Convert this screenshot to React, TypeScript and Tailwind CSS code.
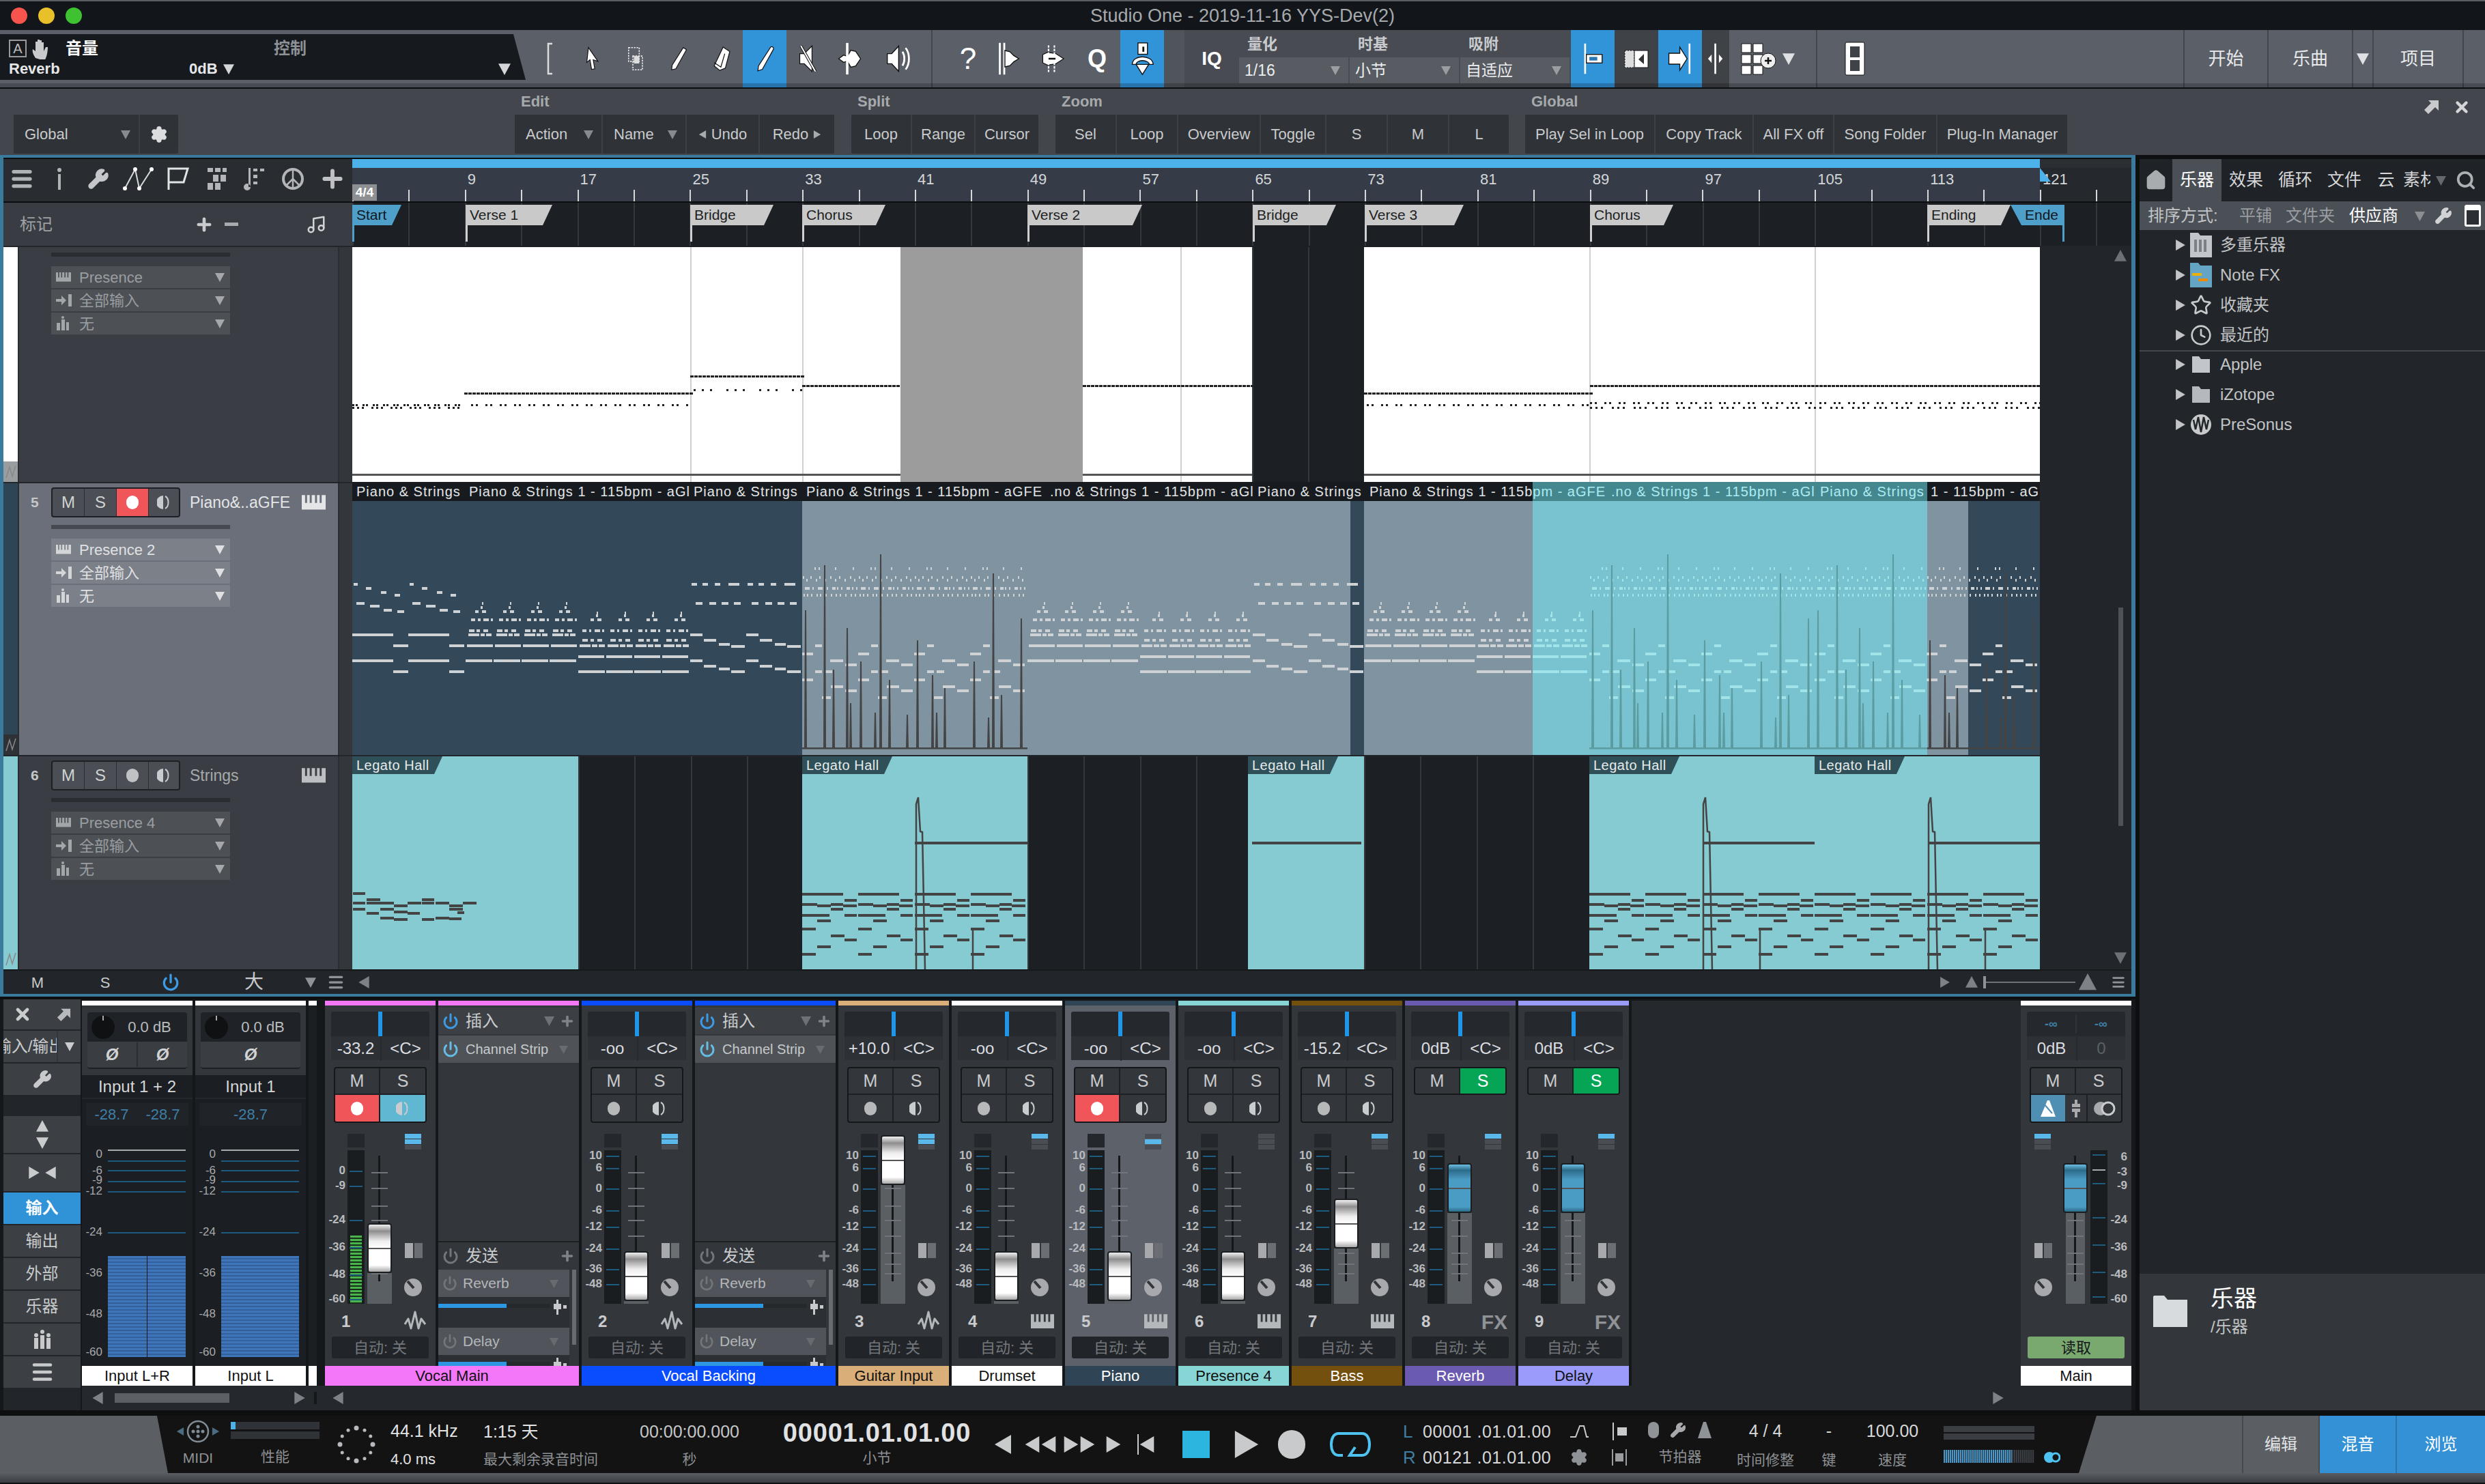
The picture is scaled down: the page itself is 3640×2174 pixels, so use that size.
import { Fragment, type ReactNode } from "react";
import { Power, Plus, Search, Star, Clock, Wrench, Settings, X, Music, Home, Menu } from "lucide-react";

type Note = [number, number, number];

function Tri({ dir = "down", s = 14, c = "#a8abae" }: { dir?: "down" | "up" | "left" | "right"; s?: number; c?: string }) {
  const pts = { down: "0,1 14,1 7,14", up: "7,0 14,13 0,13", left: "13,0 13,14 1,7", right: "1,0 1,14 13,7" }[dir];
  return (
    <svg width={s} height={s} viewBox="0 0 14 14" className="shrink-0">
      <polygon points={pts} fill={c} />
    </svg>
  );
}

function PianoIcon({ w = 36, c = "#b5b8bb" }: { w?: number; c?: string }) {
  return (
    <svg width={w} height={w * 0.62} viewBox="0 0 36 22" className="shrink-0">
      <path d="M0 0h5v12h3V0h4v12h3V0h5v12h3V0h4v12h3V0h6v22H0z" fill={c} />
    </svg>
  );
}

function WaveIcon() {
  return (
    <svg width="34" height="32" viewBox="0 0 34 32" className="shrink-0">
      <path d="M1 20l5-8 4 14 6-24 5 24 4-14 6 8" fill="none" stroke="#b5b8bb" strokeWidth="3" strokeLinejoin="round" />
    </svg>
  );
}

function MonitorIcon({ c = "#c9cccf" }: { c?: string }) {
  return (
    <svg width="20" height="22" viewBox="0 0 20 22">
      <path d="M9 1a10 10 0 0 0 0 20z" fill={c} />
      <path d="M12 2c6 3 6 15 0 18" fill="none" stroke={c} strokeWidth="2" />
    </svg>
  );
}

const ICON_H: Record<string, number> = { arrow: 42, range: 42, pencil: 42, eraser: 44, pen: 44, mute: 44, split: 48, speaker: 50, bend: 50, slice: 46, follow: 50, snapA: 48, snapC: 48, snapD: 48 };

function ToolIcon({ name }: { name: string }) {
  const sw = { fill: "#fff", stroke: "#111", strokeWidth: 1.5 };
  const h = ICON_H[name] ?? 54;
  const box = (children: ReactNode) => (
    <svg width={(h * 44) / 54} height={h} viewBox="0 0 44 54">
      {children}
    </svg>
  );
  if (name === "bracket") return box(<path d="M27 5h-6v44h6" fill="none" stroke="#ddd" strokeWidth="2.5" />);
  if (name === "arrow") return box(<path d="M14 6l18 26-9-3 3 17-6 1-3-18-6 5z" {...sw} />);
  if (name === "range")
    return box(
      <g fill="none" stroke="#eee" strokeWidth="2" strokeDasharray="3 2">
        <rect x="10" y="6" width="20" height="26" />
        <rect x="18" y="22" width="18" height="26" />
        <path d="M20 22h10v14H20z" fill="#ddd" stroke="none" />
      </g>
    );
  if (name === "pencil") return box(<path d="M32 6l6 4-20 36-8 2 1-9z" {...sw} />);
  if (name === "eraser")
    return box(
      <g {...sw}>
        <path d="M26 6l12 8-8 30-10 4-10-8z" />
        <path d="M10 34l12 8 7-24" fill="none" />
      </g>
    );
  if (name === "pen") return box(<path d="M33 6c3-2 6 1 5 4L18 46l-8 3 1-9z" {...sw} />);
  if (name === "mute")
    return box(
      <g>
        <path d="M8 18h8l14-14v46L16 36H8z" {...sw} />
        <path d="M10 4l26 46" stroke="#111" strokeWidth="5" />
        <path d="M10 4l26 46" stroke="#fff" strokeWidth="2.5" />
      </g>
    );
  if (name === "split")
    return box(
      <g>
        <path d="M4 27l8-6 6 2 6-10 8 2 8 12-8 12-8 2-6-10-6 2z" {...sw} />
        <path d="M18 1v52" stroke="#fff" strokeWidth="4" />
      </g>
    );
  if (name === "speaker")
    return box(
      <g>
        <path d="M4 19h7L22 7v40L11 35H4z" {...sw} />
        <path d="M28 16c4 6 4 16 0 22M33 10c7 9 7 25 0 34" fill="none" stroke="#fff" strokeWidth="3" />
      </g>
    );
  if (name === "bend")
    return box(
      <g>
        <path d="M6 2v50M13 2v50" stroke="#fff" strokeWidth="3" />
        <path d="M14 14l8 2 6 6 8 5-8 5-6 6-8 2z" {...sw} />
      </g>
    );
  if (name === "slice")
    return box(
      <g>
        <path d="M4 20l8-4 14 2 14 9-14 9-14 2-8-4z" {...sw} />
        <path d="M14 4v46M24 4v46" stroke="#fff" strokeWidth="2.5" strokeDasharray="4 2" />
        <path d="M14 27h12" stroke="#111" strokeWidth="3" />
      </g>
    );
  if (name === "follow")
    return box(
      <g>
        <rect x="15" y="2" width="15" height="18" {...sw} />
        <path d="M22 8h3v8h-3z" fill="#111" />
        <path d="M6 36c0-8 8-12 16-12s17 4 17 12h-6c0-3-5-6-11-6s-10 3-10 6z" {...sw} />
        <path d="M12 36h20l-10 16z" {...sw} />
      </g>
    );
  if (name === "snapA")
    return box(
      <g>
        <path d="M10 2v50" stroke="#fff" strokeWidth="3" />
        <rect x="12" y="20" width="26" height="14" {...sw} />
        <rect x="17" y="24" width="13" height="6" fill="#2d78b0" />
      </g>
    );
  if (name === "snapB")
    return box(
      <g>
        <rect x="5" y="15" width="14" height="25" fill="#ddd" stroke="#111" strokeDasharray="2 2" />
        <rect x="19" y="15" width="20" height="25" fill="#fff" stroke="#111" />
        <path d="M33 20v15l-8-7z" fill="#333" />
      </g>
    );
  if (name === "snapC")
    return box(
      <g>
        <path d="M4 18h18V8l12 19-12 19V36H4z" {...sw} />
        <path d="M38 2v50" stroke="#fff" strokeWidth="3" />
      </g>
    );
  if (name === "snapD")
    return box(
      <g>
        <path d="M22 2v50" stroke="#fff" strokeWidth="3" />
        <path d="M16 20l-6 7 6 7zM28 20l6 7-6 7z" fill="#fff" />
      </g>
    );
  if (name === "grid")
    return (
      <svg width="60" height="54" viewBox="0 0 60 54">
        <path d="M4 5h14v13H4zM21 5h14v13H21zM4 21h14v13H4zM21 21h14v13H21zM4 37h14v13H4zM21 37h14v13H21z" fill="#fff" stroke="#111" />
        <circle cx="43" cy="30" r="11" fill="#eee" stroke="#111" />
        <path d="M38 30h10M43 25v10" stroke="#111" strokeWidth="2.5" />
      </svg>
    );
  if (name === "film")
    return box(
      <g>
        <rect x="8" y="3" width="28" height="48" rx="2" fill="#fff" stroke="#111" />
        <rect x="15" y="9" width="14" height="16" fill="#3f4247" />
        <rect x="15" y="29" width="14" height="16" fill="#3f4247" />
      </g>
    );
  return null;
}

function Cell({ w, blue, dark, border, children }: { w: number; blue?: boolean; dark?: boolean; border?: boolean; children?: ReactNode }) {
  return (
    <div
      className={`flex h-full shrink-0 items-center justify-center ${blue ? "bg-[#3193d8]" : dark ? "bg-[#3f4247]" : ""} ${border ? "border-r-2 border-[#43474c]" : ""}`}
      style={{ width: w }}
    >
      {children}
    </div>
  );
}

function TitleBar() {
  return (
    <div className="grid h-[44px] shrink-0 grid-cols-[1fr_auto_1fr] items-center border-t-2 border-[#5a5e62] bg-[#12161a]">
      <div className="flex gap-[16px] pl-[16px]">
        <span className="h-[24px] w-[24px] rounded-full bg-[#f6544d]" />
        <span className="h-[24px] w-[24px] rounded-full bg-[#e8c02a]" />
        <span className="h-[24px] w-[24px] rounded-full bg-[#3fc232]" />
      </div>
      <div className="text-[27px] text-[#a6a9ac]">Studio One - 2019-11-16 YYS-Dev(2)</div>
      <div />
    </div>
  );
}

function QuantCol({ label, value }: { label: string; value: string }) {
  return (
    <div className="flex w-[162px] shrink-0 flex-col">
      <div className="flex h-[40px] items-center pl-[12px] text-[22px] font-bold text-[#c9cbce]">{label}</div>
      <div className="mr-[2px] flex h-[38px] items-center justify-between bg-[#585c62] pl-[8px] pr-[12px] text-[23px] text-[#eceef0]">
        {value}
        <Tri c="#9a9da1" />
      </div>
    </div>
  );
}

function Toolbar() {
  return (
    <div className="relative flex h-[84px] shrink-0 items-stretch bg-[#5b5f67]">
      <div className="my-[6px] mb-[11px] flex w-[770px] shrink-0 flex-col justify-center bg-[#16191e] pl-[13px] [clip-path:polygon(0_0,752px_0,100%_100%,0_100%)]">
        <div className="flex h-[34px] items-center pt-[4px]">
          <span className="flex h-[26px] w-[26px] items-center justify-center border-2 border-[#999] text-[20px] text-[#bbb]">A</span>
          <svg width="30" height="32" viewBox="0 0 30 32" className="ml-[7px]">
            <path d="M6 30c-4-6-5-10-4-13l4 3V6h3v10-13h3v13-12h3v12-9h3v13l3-6h3c0 8-2 16-5 20z" fill="#c8cacc" />
          </svg>
          <span className="ml-[20px] w-[305px] text-[24px] font-bold text-white">音量</span>
          <span className="text-[24px] font-bold text-[#8d9094]">控制</span>
        </div>
        <div className="flex h-[30px] items-center pr-[22px] text-[22px] font-bold text-[#e6e7e8]">
          <span className="w-[264px]">Reverb</span>
          <span>0dB</span>
          <span className="ml-[8px]"><Tri c="#d5d6d8" s={16} /></span>
          <span className="ml-auto"><Tri c="#d5d6d8" s={18} /></span>
        </div>
      </div>
      <Cell w={68}><ToolIcon name="bracket" /></Cell>
      <Cell w={60}><ToolIcon name="arrow" /></Cell>
      <Cell w={64}><ToolIcon name="range" /></Cell>
      <Cell w={62}><ToolIcon name="pencil" /></Cell>
      <Cell w={64}><ToolIcon name="eraser" /></Cell>
      <Cell w={64} blue><ToolIcon name="pen" /></Cell>
      <Cell w={62}><ToolIcon name="mute" /></Cell>
      <Cell w={62}><ToolIcon name="split" /></Cell>
      <Cell w={80}><ToolIcon name="speaker" /></Cell>
      <Cell w={10} border />
      <div className="w-[23px] shrink-0" />
      <Cell w={58}><span className="text-[44px] font-light text-white">?</span></Cell>
      <Cell w={64}><ToolIcon name="bend" /></Cell>
      <Cell w={64}><ToolIcon name="slice" /></Cell>
      <Cell w={64}><span className="text-[36px] font-bold text-white">Q</span></Cell>
      <div className="w-[2px] shrink-0" />
      <Cell w={64} blue><ToolIcon name="follow" /></Cell>
      <div className="w-[30px] shrink-0 bg-[#50545b]" />
      <div className="flex shrink-0 items-stretch bg-[#484c52]">
        <div className="flex w-[80px] items-center justify-center text-[28px] font-bold text-white">IQ</div>
        <QuantCol label="量化" value="1/16" />
        <QuantCol label="时基" value="小节" />
        <QuantCol label="吸附" value="自适应" />
      </div>
      <Cell w={64} blue><ToolIcon name="snapA" /></Cell>
      <Cell w={64} dark><ToolIcon name="snapB" /></Cell>
      <Cell w={64} blue><ToolIcon name="snapC" /></Cell>
      <Cell w={40} dark><ToolIcon name="snapD" /></Cell>
      <div className="flex w-[129px] shrink-0 items-center justify-start gap-[4px] border-r-2 border-[#43474c] pl-[14px]">
        <ToolIcon name="grid" />
        <Tri c="#e0e1e3" s={18} />
      </div>
      <Cell w={110}><ToolIcon name="film" /></Cell>
      <div className="w-[428px] shrink-0 border-r-2 border-[#43474c]" />
      <Cell w={123} border><span className="text-[26px] text-[#e8e9ea]">开始</span></Cell>
      <Cell w={124} border><span className="text-[26px] text-[#e8e9ea]">乐曲</span></Cell>
      <Cell w={30} border><Tri c="#e0e1e3" s={18} /></Cell>
      <Cell w={132} border><span className="text-[26px] text-[#e8e9ea]">项目</span></Cell>
      <div className="pointer-events-none absolute inset-x-0 bottom-0 h-[6px] bg-black/20" />
    </div>
  );
}

function MacroGroup({ title, ml, items }: { title?: string; ml: number; items: [string, number][] }) {
  return (
    <div className="flex shrink-0 flex-col" style={{ marginLeft: ml }}>
      <div className="flex h-[38px] items-end pb-[3px] pl-[9px] text-[22px] font-bold text-[#a7aaad]">{title}</div>
      <div className="flex h-[57px] rounded-[2px] bg-[#2f3237]">
        {items.map(([label, w], i) => (
          <div
            key={label + i}
            className={`flex items-center justify-center gap-[7px] text-[22px] text-[#c8cacc] ${i ? "border-l-2 border-[#3d4046]" : ""}`}
            style={{ width: w }}
          >
            {label === "<Undo" ? (
              <>
                <Tri dir="left" s={12} /> Undo
              </>
            ) : label === "Redo>" ? (
              <>
                Redo <Tri dir="right" s={12} />
              </>
            ) : label === "Action" || label === "Name" || label === "Global" ? (
              <div className="flex w-full items-center justify-between pl-[16px] pr-[12px]">
                <span>{label}</span> <Tri c="#878a8e" />
              </div>
            ) : label === "gear" ? (
              <Settings size={26} color="#dcdddf" fill="#dcdddf" />
            ) : (
              label
            )}
          </div>
        ))}
      </div>
    </div>
  );
}

function MacroBar() {
  return (
    <div className="flex h-[99px] shrink-0 border-t-2 border-[#0d0f11] bg-[#43474d] pb-[2px]">
      <MacroGroup ml={20} items={[["Global", 183], ["gear", 58]]} />
      <MacroGroup ml={493} title="Edit" items={[["Action", 127], ["Name", 123], ["<Undo", 107], ["Redo>", 111]]} />
      <MacroGroup ml={25} title="Split" items={[["Loop", 87], ["Range", 93], ["Cursor", 94]]} />
      <MacroGroup ml={25} title="Zoom" items={[["Sel", 88], ["Loop", 90], ["Overview", 121], ["Toggle", 96], ["S", 90], ["M", 90], ["L", 89]]} />
      <MacroGroup ml={24} title="Global" items={[["Play Sel in Loop", 189], ["Copy Track", 144], ["All FX off", 118], ["Song Folder", 151], ["Plug-In Manager", 192]]} />
      <div className="ml-auto flex items-start gap-[20px] pr-[21px] pt-[14px]">
        <svg width="24" height="24" viewBox="0 0 24 24">
          <path d="M8 3h15v15l-5-5-10 10-6-6 10-10z" fill="#c8cacc" />
        </svg>
        <X size={26} strokeWidth={4} color="#d5d6d8" />
      </div>
    </div>
  );
}

const GRID = "bg-[repeating-linear-gradient(90deg,#34383d_0_2px,transparent_2px_82.4px)]";

function ToolStrip() {
  const tools: [number, ReactNode][] = [
    [54, <Menu key="m" size={36} strokeWidth={3.5} color="#b0b3b6" />],
    [56, <svg key="i" width="10" height="32" viewBox="0 0 10 32"><circle cx="5" cy="3" r="3" fill="#b0b3b6" /><path d="M3 9h4v23H3z" fill="#b0b3b6" /></svg>],
    [58, <Wrench key="w" size={32} color="#c4c6c9" fill="#c4c6c9" />],
    [59, <svg key="c" width="46" height="36" viewBox="0 0 46 36"><path d="M3 32L18 4l6 28L42 4" fill="none" stroke="#d8d9db" strokeWidth="2" /><circle cx="3" cy="32" r="3" fill="#fff" /><circle cx="18" cy="4" r="3" fill="#fff" /><circle cx="24" cy="32" r="3" fill="#fff" /><circle cx="42" cy="4" r="3" fill="#fff" /></svg>],
    [58, <svg key="f" width="34" height="36" viewBox="0 0 34 36"><path d="M3 34V3h28l-6 20H3" fill="none" stroke="#e2e3e5" strokeWidth="3" /></svg>],
    [55, <svg key="g" width="32" height="36" viewBox="0 0 32 36"><path d="M2 2h8v6H2zM13 2h8v6h-8zM24 2h6v6h-6zM10 12h8v10h-8zM21 12h8v10h-8zM2 24h8v10H2zM13 24h8v10h-8z" fill="#b3b5b8" /></svg>],
    [55, <svg key="n" width="36" height="36" viewBox="0 0 36 36"><path d="M9 30V2h3v28zM2 30a5 5 0 1 0 10 0 5 5 0 0 0-10 0zM16 3h6v4h-6zM26 3h6v4h-6zM16 12h6v5h-6zM16 22h6v4h-6z" fill="#b3b5b8" /></svg>],
    [57, <svg key="p" width="34" height="38" viewBox="0 0 34 38"><circle cx="17" cy="19" r="14" fill="none" stroke="#b3b5b8" strokeWidth="4" /><path d="M17 5v28M17 19L7 29M17 19l10 10" stroke="#b3b5b8" strokeWidth="2.5" /></svg>],
    [59, <Plus key="a" size={40} strokeWidth={3.5} color="#bfc1c4" />],
  ];
  return (
    <div className="flex h-[62px] w-[511px] shrink-0 items-center bg-[#292c30] pb-[4px]">
      {tools.map(([w, icon], i) => (
        <div key={i} className="flex shrink-0 justify-center" style={{ width: w }}>
          {icon}
        </div>
      ))}
    </div>
  );
}

function Ruler() {
  const nums = Array.from({ length: 16 }, (_, i) => 1 + i * 8);
  return (
    <div className="flex min-w-0 flex-1 flex-col overflow-hidden">
      <div className="flex h-[13px]">
        <div className="w-[2472px] bg-[#4eb2ea]" />
        <div className="flex-1 bg-[#2b2e33]" />
      </div>
      <div className="relative flex-1 bg-[linear-gradient(90deg,#353c48_2472px,#25282c_2472px)]">
        <div className="flex h-[32px] items-center">
          {nums.map((n) => (
            <div key={n} className="w-[164.8px] shrink-0 pl-[4px] text-[22px] text-[#d4d6d8]">
              {n === 1 ? "" : n}
            </div>
          ))}
        </div>
        <div className="flex h-[17px]">
          {Array.from({ length: 32 }, (_, i) => (
            <div key={i} className="w-[82.4px] shrink-0 border-l-2 border-[#d6d7d9]" />
          ))}
        </div>
        <span className="absolute bottom-[1px] left-0 flex h-[24px] w-[36px] items-center justify-center bg-[#8d8f92] text-[19px] font-bold text-white">4/4</span>
        <span className="absolute left-[2472px] top-0 border-l-[16px] border-t-[20px] border-l-[#4eb2ea] border-t-transparent" />
      </div>
    </div>
  );
}

const markers: [string, number, number, boolean?][] = [
  ["Start", 166, 72, true],
  ["Verse 1", 329, 127],
  ["Bridge", 164, 122],
  ["Chorus", 330, 122],
  ["Verse 2", 330, 168],
  ["Bridge", 164, 122],
  ["Verse 3", 330, 145],
  ["Chorus", 494, 122],
  ["Ending", 122, 122],
];

function MarkerRow() {
  return (
    <div className="flex h-full w-[511px] shrink-0 items-center bg-[#393d43] pl-[24px] pr-[38px]">
      <span className="w-[256px] text-[24px] text-[#9ea1a4]">标记</span>
      <Plus size={28} strokeWidth={4} color="#c9cbcd" />
      <span className="ml-[16px] h-[5px] w-[20px] bg-[#a9abae]" />
      <span className="ml-auto"><Music size={30} color="#d1d2d4" /></span>
    </div>
  );
}

function MarkerLane() {
  return (
    <div className={`flex min-w-0 flex-1 overflow-hidden bg-[#1c2024] pt-[3px] ${GRID}`}>
      {markers.map(([label, w, fw, blue], i) => (
        <div key={label + i} className="flex shrink-0 flex-col" style={{ width: w }}>
          <div
            className={`flex h-[30px] items-center pl-[6px] text-[21px] [clip-path:polygon(0_0,100%_0,calc(100%-14px)_100%,0_100%)] ${blue ? "bg-[#4f9fcb] text-[#10171c]" : "bg-[#c9c9c9] text-[#1d1f22]"}`}
            style={{ width: fw }}
          >
            {label}
          </div>
          <div className={`h-[24px] w-[3px] ${blue ? "bg-[#4f9fcb]" : "bg-[#d0d0d0]"}`} />
        </div>
      ))}
      <div className="flex w-[79px] shrink-0 flex-col items-end">
        <div className="flex h-[30px] w-full items-center bg-[#4f9fcb] pl-[21px] text-[21px] text-[#10171c] [clip-path:polygon(0_0,100%_0,100%_100%,16px_100%)]">Ende</div>
        <div className="h-[24px] w-[3px] bg-[#4f9fcb]" />
      </div>
    </div>
  );
}

function Drop({ icon, label, light }: { icon: ReactNode; label: string; light?: boolean }) {
  return (
    <div className={`flex h-[32px] w-[262px] items-center pl-[7px] pr-[8px] text-[22px] ${light ? "bg-[#7b8089] text-[#e0e1e3]" : "bg-[#4d5156] text-[#9a9da1]"}`}>
      <span className="flex w-[34px]">{icon}</span>
      <span className="flex-1">{label}</span>
      <Tri s={14} c={light ? "#dfe0e2" : "#a5a7aa"} />
    </div>
  );
}

function TrackControls({ preset, light }: { preset: string; light?: boolean }) {
  const c = light ? "#d4d5d7" : "#a3a6a9";
  return (
    <>
      <div className={`mb-[14px] h-[6px] w-[262px] ${light ? "bg-[#464a50]" : "bg-[#2a2d31]"}`} />
      <div className="flex w-[262px] flex-col gap-[2px]">
        <Drop light={light} label={preset} icon={<PianoIcon w={22} c={c} />} />
        <Drop light={light} label="全部输入" icon={<svg width="24" height="20" viewBox="0 0 24 20"><path d="M0 8h8V3l7 7-7 7v-5H0zM18 1h5v18h-5z" fill={c} /></svg>} />
        <Drop light={light} label="无" icon={<svg width="20" height="22" viewBox="0 0 20 22"><path d="M1 10h5v11H1zM8 5h5v16H8zM15 9h4v12h-4z" fill={c} /><circle cx="10" cy="2" r="2" fill={c} /></svg>} />
      </div>
    </>
  );
}

function TrackHead({ h, strip, bg, sel, num, name, rec, preset, side }: { h: number; strip: string; bg: string; sel?: boolean; num?: number; name?: string; rec?: boolean; preset: string; side: string }) {
  return (
    <div className={`flex w-[511px] shrink-0 border-t-2 border-[#22252a] ${bg}`} style={{ height: h }}>
      <div className={`flex w-[21px] shrink-0 flex-col justify-end ${strip}`}>
        <div className={`flex h-[30px] items-center justify-center ${side}`}>
          <svg width="16" height="20" viewBox="0 0 16 20"><path d="M1 19L6 3l4 14 5-16" fill="none" stroke="#888" strokeWidth="1.5" /></svg>
        </div>
      </div>
      <div className="flex flex-1 flex-col border-x-2 border-[#2a2d31] pl-[47px] pt-[6px]">
        {num ? (
          <div className="mb-[11px] flex h-[44px] items-center">
            <span className="-ml-[30px] w-[30px] text-[21px] font-bold text-[#c4c6c8]">{num}</span>
            <div className="flex h-[44px] w-[189px] overflow-hidden rounded-[4px] border-2 border-[#1d2024] bg-[#4b4f55]">
              <div className="flex w-[47px] items-center justify-center border-r border-[#2a2d31] text-[24px] text-[#d0d1d3]">M</div>
              <div className="flex w-[47px] items-center justify-center border-r border-[#2a2d31] text-[24px] text-[#d0d1d3]">S</div>
              <div className={`flex w-[47px] items-center justify-center border-r border-[#2a2d31] ${rec ? "bg-[#f0555a]" : ""}`}>
                <span className={`h-[20px] w-[18px] rounded-full ${rec ? "bg-white" : "bg-[#bfc1c3]"}`} />
              </div>
              <div className="flex flex-1 items-center justify-center"><MonitorIcon /></div>
            </div>
            <span className={`ml-[14px] w-[164px] whitespace-nowrap text-[23px] ${sel ? "text-[#e4e5e7]" : "text-[#a6a9ac]"}`}>{name}</span>
            <PianoIcon w={35} c={sel ? "#e4e5e7" : "#bcbec1"} />
          </div>
        ) : (
          <div className="h-[2px]" />
        )}
        <TrackControls preset={preset} light={sel} />
      </div>
      <div className="w-[19px] shrink-0 bg-[#33373c]" />
    </div>
  );
}

// pitch rows of the little piano-roll pictures, in page coordinates
function s1(b: number): Note[] {
  const o: Note[] = [];
  [0, 82].forEach((d) => {
    o.push([b + d, 930, 60], [b + d + 60, 946, 22], [b + d, 968, 60], [b + d + 60, 984, 22]);
    o.push([b + d + 2, 856, 6], [b + d + 20, 862, 8], [b + d + 42, 868, 8], [b + d + 62, 872, 8]);
    o.push([b + d + 6, 884, 12], [b + d + 26, 888, 14], [b + d + 46, 894, 12], [b + d + 66, 896, 10]);
  });
  return o;
}
function s2(b: number): Note[] {
  const o: Note[] = [];
  for (let i = 0; i < 4; i++) {
    const d = b + i * 41;
    o.push([d + 2, 946, 38], [d, 968, 39]);
    o.push([d + 4, 930, 16], [d + 22, 930, 6], [d + 30, 930, 8]);
    o.push([d + 5, 924, 8], [d + 16, 924, 5], [d + 26, 924, 7]);
    o.push([d + 8, 908, 6], [d + 18, 908, 4], [d + 26, 908, 8], [d + 37, 908, 3]);
    o.push([d + 14, 896, 5], [d + 24, 896, 6], [d + 22, 890, 3], [d + 24, 884, 2]);
  }
  return o;
}
function s3(b: number): Note[] {
  const o: Note[] = [];
  for (let i = 0; i < 4; i++) {
    const d = b + i * 41;
    o.push([d, 962, 38], [d, 984, 39]);
    o.push([d + 2, 946, 16], [d + 20, 946, 8], [d + 30, 946, 9]);
    o.push([d + 6, 938, 8], [d + 18, 938, 5], [d + 28, 938, 7]);
    o.push([d + 6, 924, 6], [d + 16, 924, 3], [d + 24, 924, 8], [d + 35, 924, 3]);
    o.push([d + 18, 908, 5], [d + 28, 908, 6], [d + 26, 902, 3], [d + 27, 898, 2]);
  }
  return o;
}
function s4(b: number): Note[] {
  const o: Note[] = [];
  [0, 82].forEach((d) => {
    o.push([b + d, 930, 18], [b + d + 20, 938, 18], [b + d + 42, 944, 16], [b + d + 60, 947, 20]);
    o.push([b + d, 968, 18], [b + d + 20, 976, 18], [b + d + 42, 980, 16], [b + d + 60, 984, 20]);
    [2, 18, 36, 56, 64].forEach((x) => o.push([b + d + x, 856, 8]));
    [8, 28, 46, 64].forEach((x) => o.push([b + d + x, 884, 10]));
  });
  return o;
}
function s5(b: number): Note[] {
  const o: Note[] = [];
  for (let i = 0; i < 4; i++) {
    const d = b + i * 82;
    o.push([d, 958, 16], [d + 19, 946, 10], [d + 41, 968, 19], [d + 63, 974, 17], [d + 19, 984, 10], [d + 33, 984, 11]);
    o.push([d, 996, 16], [d + 42, 1006, 18], [d + 63, 1012, 17], [d + 29, 1022, 13]);
    [1, 6, 12, 20, 25, 33, 41, 48, 54, 62, 70, 76].forEach((x, k) => {
      o.push([d + x, 846 + (k % 2) * 4, 2]);
      o.push([d + x + 3, 862, k % 3 === 0 ? 5 : 2]);
      o.push([d + x + 1, 872, 2]);
    });
    [18, 24, 48, 74].forEach((x) => o.push([d + x, 833, 2]));
  }
  return o;
}
const spikes: [number, number][] = [[4, 896], [32, 830], [45, 983], [65, 922], [70, 1032], [85, 971], [106, 1046], [114, 814], [127, 998], [153, 1049], [168, 940], [190, 991], [196, 1046], [208, 1010], [251, 971], [272, 1053], [279, 842], [291, 1020], [320, 908]];

function Notes({ notes, top, color, h = 4 }: { notes: Note[]; top: number; color: string; h?: number }) {
  return (
    <>
      {notes.map(([x, y, w], i) => (
        <rect key={i} x={x - 516} y={y - top} width={w} height={h} fill={color} />
      ))}
    </>
  );
}

function dashes(x0: number, x1: number, y: number, step: number, w: number, skip = 0): Note[] {
  const o: Note[] = [];
  let i = 0;
  for (let x = x0; x < x1; x += step) {
    i++;
    if (skip && i % skip === 0) continue;
    o.push([x, y, w]);
  }
  return o;
}

function Lane1() {
  const notes = [
    ...dashes(516, 680, 592, 5, 3, 3),
    ...dashes(516, 680, 596, 7, 3, 4),
    ...dashes(680, 1011, 575, 6, 5),
    ...dashes(690, 1011, 592, 7, 3, 3),
    ...dashes(1011, 1175, 550, 6, 5),
    ...dashes(1016, 1175, 570, 12, 3, 4),
    ...dashes(1175, 1319, 564, 6, 5),
    ...dashes(1586, 1834, 564, 6, 5),
    ...dashes(1998, 2329, 575, 6, 5),
    ...dashes(2002, 2329, 592, 7, 3, 3),
    ...dashes(2329, 2988, 564, 6, 5),
    ...dashes(2329, 2988, 589, 7, 3, 3),
    ...dashes(2329, 2988, 596, 8, 3, 4),
  ];
  return (
    <div className="relative flex h-[346px] w-[2472px] shrink-0 overflow-hidden border-t-2 border-[#1c2024]">
      <div className="w-[803px] bg-white" />
      <div className="w-[267px] bg-[#9c9c9c]" />
      <div className="w-[248px] bg-white" />
      <div className={`w-[164px] bg-[#1c2024] ${GRID}`} />
      <div className="w-[990px] bg-white" />
      <svg className="absolute left-0 top-0" width="2472" height="346">
        {[495, 659, 1213, 1812, 2142].map((x) => (
          <rect key={x} x={x} y="0" width="2" height="346" fill="#d0d0d0" />
        ))}
        <rect x="0" y="332" width="803" height="3" fill="#555" />
        <rect x="1070" y="332" width="248" height="3" fill="#555" />
        <rect x="1482" y="332" width="990" height="3" fill="#555" />
        <Notes notes={notes} top={362} color="#222" h={3} />
      </svg>
    </div>
  );
}

const label5: [string, number][] = [
  ["Piano & Strings", 171],
  ["Piano & Strings 1 - 115bpm - aGl", 329],
  ["Piano & Strings", 165],
  ["Piano & Strings 1 - 115bpm - aGFE", 357],
  [".no & Strings 1 - 115bpm - aGl", 304],
  ["Piano & Strings", 164],
  ["Piano & Strings 1 - 115bpm - aGFE", 354],
  [".no & Strings 1 - 115bpm - aGl", 306],
  ["Piano & Strings", 162],
  ["1 - 115bpm - aGl", 160],
];

function Lane5() {
  const light = [...s1(516), ...s2(682), ...s3(847), ...s4(1011), ...s5(1175), ...s2(1505), ...s3(1670), ...s4(1835), ...s2(1998), ...s3(2163), ...s5(2328), ...s5(2658)];
  return (
    <div className="relative flex h-[400px] w-[2472px] shrink-0 flex-col overflow-hidden">
      <div className="flex h-[28px] shrink-0 items-center bg-[#171b1f] text-[20px] tracking-[1px] text-[#e2e4e6]">
        {label5.map(([t, w], i) => (
          <div key={i} className={`shrink-0 overflow-hidden whitespace-nowrap ${i === 0 ? "pl-[6px]" : ""}`} style={{ width: w }}>
            {t}
          </div>
        ))}
      </div>
      <div className="flex flex-1">
        <div className="w-[659px] bg-[#33495a]" />
        <div className="w-[803px] bg-[#7f93a1]" />
        <div className="w-[20px] bg-[#33495a]" />
        <div className="w-[885px] bg-[#7f93a1]" />
        <div className="w-[105px] bg-[#33495a]" />
      </div>
      <svg className="absolute left-0 top-0" width="2472" height="400">
        <Notes notes={light} top={708} color="#cfd2d4" />
        {[1175, 2328, 2658].map((b) => (
          <g key={b} fill="#444">
            <rect x={b - 516} y={1097 - 708} width="330" height="2.5" />
            {spikes.map(([x, t]) => (
              <polygon key={x} points={`${b - 516 + x - 1},${1098 - 708} ${b - 516 + x},${t - 708} ${b - 516 + x + 2},${t - 708} ${b - 516 + x + 3},${1098 - 708}`} />
            ))}
          </g>
        ))}
      </svg>
      <div className="absolute bottom-0 left-[1729px] top-0 w-[578px] bg-[#71f3fd]/50" />
    </div>
  );
}

function s6(b: number): Note[] {
  const o: Note[] = [];
  [0, 82].forEach((d) => {
    o.push([b + d, 1308, 60], [b + d + 62, 1317, 18], [b + d, 1323, 22], [b + d + 22, 1325, 20], [b + d + 42, 1323, 18], [b + d + 60, 1325, 20]);
    o.push([b + d + 42, 1330, 18], [b + d, 1339, 40], [b + d + 62, 1339, 18], [b + d + 22, 1347, 20]);
    o.push([b + d, 1359, 20], [b + d + 42, 1369, 20], [b + d + 62, 1375, 18], [b + d + 22, 1385, 20], [b + d, 1396, 20]);
  });
  return o;
}

function Lane6() {
  const first: Note[] = [
    [517, 1307, 18], [517, 1321, 18], [517, 1330, 18], [537, 1316, 20], [537, 1321, 20], [537, 1336, 18], [557, 1321, 20], [557, 1330, 20], [557, 1343, 20],
    [577, 1325, 20], [577, 1334, 20], [577, 1345, 20], [597, 1321, 20], [597, 1336, 18], [618, 1316, 18], [618, 1345, 18], [618, 1321, 18], [638, 1321, 20],
    [638, 1343, 20], [658, 1325, 20], [658, 1330, 20], [658, 1344, 18], [678, 1321, 20], [670, 1335, 10],
  ];
  const notes = [...first, ...s6(1175), ...s6(1340), ...s6(2328), ...s6(2494), ...s6(2658), ...s6(2823)];
  const clips: [number, boolean][] = [[331, true], [328, false], [330, true], [323, false], [170, false], [330, false], [330, true], [330, true]];
  return (
    <div className="relative flex h-[314px] w-[2472px] shrink-0 overflow-hidden border-t-2 border-[#22262a]">
      {clips.map(([w, flag], i) =>
        flag || i === 4 ? (
          <div key={i} className="shrink-0 bg-[#86cad2]" style={{ width: w }}>
            <div className="flex h-[26px] w-[132px] items-center bg-[#2f5058] pl-[6px] text-[20px] tracking-[0.5px] text-[#e6eaea] [clip-path:polygon(0_0,100%_0,calc(100%-12px)_100%,0_100%)]">Legato Hall</div>
          </div>
        ) : (
          <div key={i} className={`shrink-0 bg-[#1c2024] ${GRID}`} style={{ width: w }} />
        )
      )}
      <svg className="absolute left-0 top-0" width="2472" height="314">
        <Notes notes={notes} top={1108} color="#444" h={4} />
        {[[824, 165], [1318, 160], [1978, 164], [2309, 163]].map(([x, w]) => (
          <rect key={x} x={x} y="125" width={w} height="4" fill="#444" />
        ))}
        {[1175, 2328, 2658].map((b) => (
          <g key={b} fill="none" stroke="#444" strokeWidth="2.5">
            <path d={`M${b - 516 + 167} 314V70l3-10 3 50 3 1 4 203`} />
            <path d={`M${b - 516 + 250} 314V255`} />
          </g>
        ))}
      </svg>
    </div>
  );
}

function ArrangeFooter() {
  return (
    <div className="flex h-[36px] shrink-0 border-t-2 border-[#16191c] bg-[#22262a]">
      <div className="flex w-[511px] shrink-0 items-center text-[#c8cacc]">
        <span className="w-[100px] text-center text-[22px]">M</span>
        <span className="w-[98px] text-center text-[22px]">S</span>
        <span className="flex w-[94px] justify-center"><Power size={26} strokeWidth={3} color="#3d9be6" /></span>
        <span className="w-[150px] text-center text-[28px]">大</span>
        <Tri s={16} c="#8f9296" />
        <span className="ml-[16px]"><Menu size={26} strokeWidth={3} color="#8f9296" /></span>
      </div>
      <div className="flex flex-1 items-center pl-[8px] pr-[8px]">
        <Tri dir="left" s={18} c="#7e8185" />
        <div className="ml-auto flex items-center">
          <Tri dir="right" s={16} c="#7e8185" />
          <span className="ml-[22px]"><Tri dir="up" s={18} c="#7e8185" /></span>
          <div className="ml-[8px] flex w-[135px] items-center">
            <span className="h-[18px] w-[4px] bg-[#8f9296]" />
            <span className="h-[2px] flex-1 bg-[#6f7276]" />
          </div>
          <span className="ml-[5px]"><Tri dir="up" s={26} c="#7e8185" /></span>
          <span className="ml-[21px]"><Menu size={22} strokeWidth={3} color="#8f9296" /></span>
        </div>
      </div>
    </div>
  );
}

function Arrange() {
  return (
    <div className="flex h-[1233px] shrink-0 flex-col border-x-[5px] border-y-[4px] border-r-[6px] border-[#3a7a9d] bg-[#1c2024]">
      <div className="h-[2px] shrink-0 bg-[#0b0d0f]" />
      <div className="flex h-[62px] shrink-0">
        <ToolStrip />
        <Ruler />
      </div>
      <div className="flex h-[65px] shrink-0 border-t-2 border-[#0b0d0f]">
        <MarkerRow />
        <MarkerLane />
      </div>
      <div className="flex h-[1060px] shrink-0">
        <div className="flex w-[2983px] shrink-0 flex-col">
          <div className="flex">
            <TrackHead h={346} strip="bg-white" side="bg-[#9a9da0]" bg="bg-[#3a3e44]" preset="Presence" />
            <Lane1 />
          </div>
          <div className="flex">
            <TrackHead h={400} strip="bg-[#2e4556]" side="bg-[#2e3237]" bg="bg-[#6a6f79]" sel num={5} name="Piano&..aGFE" rec preset="Presence 2" />
            <Lane5 />
          </div>
          <div className="flex">
            <TrackHead h={314} strip="bg-[#86cad2]" side="bg-[#86cad2]" bg="bg-[#3a3e44]" num={6} name="Strings" preset="Presence 4" />
            <Lane6 />
          </div>
        </div>
        <div className="flex flex-1 flex-col items-end bg-[#22262a] pr-[7px] pt-[6px]">
          <Tri dir="up" s={18} c="#6d7074" />
          <div className="mr-[5px] mt-[506px] h-[320px] w-[7px] bg-[#4f5358]" />
          <div className="mt-auto pb-[8px]"><Tri s={18} c="#6d7074" /></div>
        </div>
      </div>
      <ArrangeFooter />
    </div>
  );
}

function Browser() {
  const tabs: [string, number][] = [["效果", 72], ["循环", 72], ["文件", 72], ["云", 50]];
  const rows: [ReactNode, string][] = [
    [
      <svg key="a" width="32" height="36" viewBox="0 0 32 36"><path d="M0 6V0h12l3 4h17v32H0z" fill="#c2c6ca" /><path d="M6 10h4v18H6zM13 10h4v18h-4zM20 10h4v18h-4z" fill="#7d8186" /></svg>,
      "多重乐器",
    ],
    [
      <svg key="b" width="32" height="36" viewBox="0 0 32 36"><path d="M0 36V0h12l3 4h17v32z" fill="#64a4c4" /><path d="M3 15h14v4H3z" fill="#eeb000" /><path d="M12 23h14v4H12z" fill="#ee8a00" /></svg>,
      "Note FX",
    ],
    [<Star key="c" size={32} color="#c7c9cb" />, "收藏夹"],
    [<Clock key="d" size={32} color="#c7c9cb" />, "最近的"],
  ];
  const rows2: [ReactNode, string][] = [
    [<svg key="e" width="26" height="24" viewBox="0 0 26 24"><path d="M0 24V0h10l3 4h13v20z" fill="#c2c6ca" /></svg>, "Apple"],
    [<svg key="f" width="26" height="24" viewBox="0 0 26 24"><path d="M0 24V0h10l3 4h13v20z" fill="#b5b9bd" /></svg>, "iZotope"],
    [
      <svg key="g" width="30" height="30" viewBox="0 0 30 30"><circle cx="15" cy="15" r="15" fill="#c7c9cb" /><path d="M4 8l3 14 4-18 4 22 4-22 4 18 3-14" fill="none" stroke="#22262a" strokeWidth="2.5" /></svg>,
      "PreSonus",
    ],
  ];
  const Row = ([icon, t]: [ReactNode, string]) => (
    <div key={t} className="flex h-[44px] items-center pl-[52px] text-[24px] text-[#c2c4c6]">
      <Tri dir="right" s={16} c="#c2c4c6" />
      <span className="flex w-[44px] justify-center">{icon}</span>
      <span className="ml-[6px]">{t}</span>
    </div>
  );
  return (
    <div className="ml-[6px] mt-[6px] flex min-w-0 flex-1 flex-col bg-[#22262a]">
      <div className="flex h-[62px] shrink-0 items-center bg-[#1f2226] text-[25px] text-[#d5d6d8]">
        <span className="flex w-[48px] justify-center"><Home size={32} color="#a9acaf" fill="#a9acaf" /></span>
        <span className="flex h-full w-[72px] items-center justify-center bg-[#4b5057] text-white">乐器</span>
        {tabs.map(([t, w]) => (
          <span key={t} className="flex justify-center" style={{ width: w }}>{t}</span>
        ))}
        <span className="w-[40px] overflow-hidden whitespace-nowrap">素材</span>
        <span className="ml-[8px]"><Tri s={15} c="#65686c" /></span>
        <span className="ml-[14px]"><Search size={30} strokeWidth={3} color="#aeb1b4" /></span>
      </div>
      <div className="flex h-[42px] shrink-0 items-center bg-[#4b5057] pl-[12px] text-[24px] text-[#9a9da1]">
        <span className="w-[134px] text-[#c2c4c6]">排序方式:</span>
        <span className="w-[68px]">平铺</span>
        <span className="w-[93px]">文件夹</span>
        <span className="w-[96px] text-white">供应商</span>
        <Tri s={15} c="#8b8e92" />
        <span className="ml-[14px]"><Wrench size={26} color="#d0d2d4" fill="#d0d2d4" /></span>
        <span className="ml-[18px] h-[32px] w-[24px] rounded-[3px] border-[3px] border-t-[8px] border-white bg-[#2b2e33]" />
      </div>
      <div>{rows.map(Row)}</div>
      <div className="h-[2px] bg-[#44484d]" />
      <div className="-mt-[3px]">{rows2.map(Row)}</div>
      <div className="mt-auto flex h-[200px] shrink-0 items-start bg-[#33373c] pl-[20px] pt-[16px]">
        <svg width="50" height="46" viewBox="0 0 50 46" className="mt-[16px]">
          <path d="M0 46V2q0-2 2-2h14l5 6h29v40z" fill="#d7dbde" />
        </svg>
        <div className="ml-[34px] flex flex-col">
          <span className="text-[34px] leading-[40px] text-white">乐器</span>
          <span className="mt-[4px] text-[24px] text-[#c2c4c6]">/乐器</span>
        </div>
      </div>
    </div>
  );
}

type Strip = {
  n: number;
  val: string;
  cap: number;
  blue?: boolean;
  type: "wave" | "piano" | "fx";
  sel?: boolean;
  rec?: boolean;
  mon?: boolean;
  bus?: boolean;
  v1?: boolean;
  lit: number[];
  color: string;
};

const STD: [string, number][] = [["10", 1695], ["6", 1713], ["0", 1743], ["-6", 1775], ["-12", 1799], ["-24", 1831], ["-36", 1861], ["-48", 1883]];
const V1: [string, number][] = [["0", 1717], ["-9", 1739], ["-24", 1789], ["-36", 1829], ["-48", 1869], ["-60", 1905]];
const MAIN: [string, number][] = [["6", 1697], ["-3", 1719], ["-9", 1739], ["-24", 1789], ["-36", 1829], ["-48", 1869], ["-60", 1905]];
const ftick = [1719, 1742, 1768, 1789, 1812, 1837, 1853, 1867];

function Knob() {
  return (
    <svg width="26" height="28" viewBox="0 0 26 28">
      <circle cx="13" cy="14" r="13" fill="#a7a9ac" />
      <path d="M5 5l9 10" stroke="#32363b" strokeWidth="4" />
    </svg>
  );
}

function Cap({ blue, top }: { blue?: boolean; top: number }) {
  return (
    <div
      className={`absolute left-[62px] flex h-[73px] w-[36px] items-center rounded-[4px] border-2 border-[#1b1e21] ${blue ? "bg-[linear-gradient(180deg,#6dbfe2_0%,#2b6a88_12%,#4b9cc4_32%,#4b9cc4_90%,#2b6a88_100%)]" : "bg-[linear-gradient(180deg,#f0f0f0_0%,#8e8e8e_14%,#ededed_35%,#fff_50%,#fff_86%,#a8a8a8_100%)]"}`}
      style={{ top: top - 1663 }}
    >
      <div className="h-[2px] w-full bg-[#555]" />
    </div>
  );
}

function FaderArea({ s }: { s: Strip }) {
  const scale = s.v1 ? V1 : STD;
  const ticks = scale.map(([, y]) => y + 4);
  return (
    <div className="relative mt-[16px] h-[249px] shrink-0">
      <div className="absolute left-[33px] top-0 h-[20px] w-[25px] bg-[#24272b]" />
      {s.v1 && <div className="absolute left-[33px] top-[25px] h-[18px] w-[25px] bg-[#141618]" />}
      <div className="absolute bottom-0 left-[33px] top-[24px] w-[25px] bg-[#1a1d20]" />
      {s.v1 && <div className="absolute bottom-0 left-[37px] h-[100px] w-[17px] bg-[repeating-linear-gradient(180deg,#47b54a_0_3px,#1a2c1c_3px_5px)]" />}
      {scale.map(([t, y]) => (
        <span key={t} className="absolute left-0 w-[30px] text-right text-[17px] font-bold leading-[16px] text-[#b9bbbe]" style={{ top: y - 1663 - 8 }}>
          {t}
        </span>
      ))}
      {ticks.map((y) => (
        <span key={y} className="absolute left-[36px] h-[2px] w-[19px] bg-[#1d5b7f]" style={{ top: y - 1663 - 4 }} />
      ))}
      <div className="absolute left-[62px] w-[36px] bg-[#5a5f64]" style={{ top: s.cap + 73 - 1663, bottom: 0 }} />
      <div className="absolute left-[78px] top-[32px] h-[184px] w-[3px] bg-[#15171a]" />
      {ftick.map((y) => (
        <span key={y} className="absolute left-[68px] h-[2px] w-[24px] bg-[#71757a]" style={{ top: y - 1663 }} />
      ))}
      <Cap blue={s.blue} top={s.cap} />
      <div className="absolute left-[117px] top-0 flex w-[24px] flex-col gap-[1px]">
        {[0, 1, 2].map((i) => (
          <span key={i} className={`h-[7px] ${s.lit.includes(i) ? "bg-[#5ab8ea]" : "bg-[#4a4e54]"}`} />
        ))}
      </div>
      <div className="absolute left-[117px] top-[160px] flex gap-[2px]">
        <span className="h-[22px] w-[12px] bg-[#a7a9ac]" />
        <span className="h-[22px] w-[12px] bg-[#6b6f74]" />
      </div>
      <div className="absolute left-[116px] top-[211px]"><Knob /></div>
    </div>
  );
}

function ChannelStrip({ s }: { s: Strip }) {
  return (
    <div className={`flex h-[535px] w-[162px] shrink-0 flex-col ${s.sel ? "bg-[#5c616a]" : "bg-[#33373c]"}`}>
      <div className="h-[7px] shrink-0" style={{ backgroundColor: s.color }} />
      <div className="mx-[9px] mt-[9px] flex h-[36px] shrink-0 justify-center rounded-t-[3px] bg-[#25282c]">
        <span className="h-[36px] w-[6px] bg-[#1f96ea]" />
      </div>
      <div className="mx-[9px] flex h-[35px] shrink-0 items-center bg-[#2d3136] text-[24px] text-[#dcdde0]">
        <span className="w-[72px] text-center">{s.val}</span>
        <span className="flex-1 border-l-2 border-[#26292d] text-center">&lt;C&gt;</span>
      </div>
      <div className="mx-[13px] mt-[10px] h-[82px] shrink-0">
        <div className={`grid overflow-hidden rounded-[4px] border-2 border-[#15171a] bg-[#33373c] ${s.bus ? "h-[41px] grid-cols-2" : "h-[82px] grid-cols-2 grid-rows-2"}`}>
          <div className="flex items-center justify-center border-b-2 border-r-2 border-[#1d2024] text-[25px] text-[#c9cbcd]">M</div>
          <div className={`flex items-center justify-center border-b-2 border-[#1d2024] text-[25px] ${s.bus ? "bg-[#06a556] text-white" : "text-[#c9cbcd]"}`}>S</div>
          {!s.bus && (
            <>
              <div className={`flex items-center justify-center border-r-2 border-[#1d2024] ${s.rec ? "bg-[#f0555a]" : ""}`}>
                <span className={`h-[20px] w-[18px] rounded-full ${s.rec ? "bg-white" : "bg-[#b6b8ba]"}`} />
              </div>
              <div className={`flex items-center justify-center ${s.mon ? "bg-[#60b7d1]" : ""}`}><MonitorIcon /></div>
            </>
          )}
        </div>
      </div>
      <FaderArea s={s} />
      <div className="mt-[16px] flex h-[20px] shrink-0 items-center justify-between pl-[24px] pr-[12px]">
        <span className="text-[24px] font-bold text-[#c9cbcd]">{s.n}</span>
        {s.type === "wave" && <WaveIcon />}
        {s.type === "piano" && <PianoIcon w={34} />}
        {s.type === "fx" && <span className="text-[30px] font-bold text-[#8f9296]">FX</span>}
      </div>
      <div className="mx-[10px] mt-[12px] flex h-[32px] shrink-0 items-center justify-center rounded-[3px] bg-[#212428] text-[22px] text-[#74777b]">自动: 关</div>
    </div>
  );
}

function InsertPanel({ color }: { color: string }) {
  const Send = ({ t }: { t: string }) => (
    <>
      <div className="flex h-[40px] shrink-0 items-center bg-[#51555b] pl-[6px] pr-[16px] text-[21px] text-[#b5b7ba]">
        <Power size={22} strokeWidth={3} color="#72767b" />
        <span className="ml-[8px] flex-1">{t}</span>
        <Tri s={13} c="#686b70" />
      </div>
      <div className="flex h-[45px] shrink-0 items-start bg-[#2c2f33] pt-[10px]">
        <div className="h-[6px] w-[100px] bg-[#2e97e2]" />
        <div className="h-[6px] w-[64px] bg-[#26292c]" />
        <svg width="26" height="26" viewBox="0 0 26 26" className="-mt-[8px] ml-[2px]"><path d="M7 2h3v22H7zM3 8h11v8H3zM17 10h5v5h-5z" fill="#c7c9cb" /></svg>
      </div>
    </>
  );
  return (
    <div className="flex h-[535px] w-[206px] shrink-0 flex-col bg-[#33373c]">
      <div className="h-[7px] shrink-0" style={{ backgroundColor: color }} />
      <div className="mt-[3px] flex h-[39px] shrink-0 items-center bg-[#3c4045] pl-[6px] pr-[6px] text-[24px] text-[#c9cbcd]">
        <Power size={24} strokeWidth={3} color="#3d9be6" />
        <span className="ml-[10px] flex-1">插入</span>
        <Tri s={15} c="#6e7276" />
        <Plus size={22} strokeWidth={4} color="#7f8286" className="ml-[8px]" />
      </div>
      <div className="mt-[2px] flex h-[40px] shrink-0 items-center bg-[#4f5358] pl-[6px] pr-[16px] text-[20px] text-[#c7c9cb]">
        <Power size={24} strokeWidth={3} color="#65bde6" />
        <span className="ml-[10px] flex-1 whitespace-nowrap">Channel Strip</span>
        <Tri s={13} c="#686b70" />
      </div>
      <div className="flex-1 border-b-2 border-[#1c1e21]" />
      <div className="flex h-[40px] shrink-0 items-center pl-[6px] pr-[6px] text-[24px] text-[#c9cbcd]">
        <Power size={24} strokeWidth={3} color="#72767b" />
        <span className="ml-[10px] flex-1">发送</span>
        <Plus size={22} strokeWidth={4} color="#7f8286" />
      </div>
      <div className="flex h-[141px] shrink-0">
        <div className="flex min-w-0 flex-1 flex-col overflow-hidden">
          <Send t="Reverb" />
          <Send t="Delay" />
        </div>
        <div className="ml-[4px] mr-[4px] flex w-[6px] flex-col">
          <div className="h-[110px] bg-[#686c71]" />
        </div>
      </div>
    </div>
  );
}

function Label({ color, text, name, w }: { color: string; text: string; name: string; w: number }) {
  return (
    <div className={`flex h-[29px] shrink-0 items-center justify-center text-[22px] ${text}`} style={{ backgroundColor: color, width: w }}>
      {name}
    </div>
  );
}

function InputStrip({ name, label, vals, pair }: { name: string; label: string; vals: string[]; pair?: boolean }) {
  const scale: [string, number, number][] = [["0", 1693, 1686], ["-6", 1717, 1716], ["-9", 1731, 1732], ["-12", 1747, 1747], ["-24", 1807, 1807], ["-36", 1867, 0], ["-48", 1927, 0], ["-60", 1983, 0]];
  return (
    <div className="flex w-[162px] shrink-0 flex-col">
      <div className="flex h-[535px] shrink-0 flex-col bg-[#33373c]">
        <div className="h-[7px] shrink-0 bg-white" />
        <div className="mx-[8px] mt-[10px] flex h-[43px] shrink-0 items-center rounded-t-[4px] bg-[#1f2226] px-[5px]">
          <svg width="36" height="36" viewBox="0 0 36 36"><circle cx="18" cy="18" r="17" fill="#0f1113" /><path d="M18 1v7" stroke="#aaa" strokeWidth="2" /></svg>
          <span className="flex-1 text-center text-[22px] text-[#b9bbbe]">0.0 dB</span>
        </div>
        <div className="mx-[8px] flex h-[40px] shrink-0 items-center rounded-b-[4px] border-b-2 border-[#1d2024] bg-[#3a3e43] text-[24px] font-bold italic text-[#d2d3d5]">
          <span className="flex-1 text-center">Ø</span>
          {pair && <span className="flex-1 border-l-2 border-[#2a2d31] text-center">Ø</span>}
        </div>
        <div className="mt-[9px] flex flex-1 flex-col bg-[#1b1e22]">
          <div className="flex h-[35px] shrink-0 items-center justify-center border-b-2 border-[#25282c] text-[24px] text-[#d5d6d8]">{name}</div>
          <div className="mx-[6px] mt-[6px] flex h-[33px] shrink-0 items-center justify-around bg-[#202327] text-[22px] text-[#3f7fa6]">
            {vals.map((v, i) => <span key={i}>{v}</span>)}
          </div>
          <div className="relative flex-1">
            {scale.map(([t, y, line]) => (
              <Fragment key={t}>
                <span className="absolute left-0 w-[30px] text-right text-[17px] leading-[16px] text-[#a7a9ac]" style={{ top: y - 1651 - 8 }}>{t}</span>
                {line > 0 && <span className={`absolute left-[38px] h-[2px] w-[114px] ${t === "0" ? "bg-[#a8aaad]" : "bg-[#1e5a80]"}`} style={{ top: line - 1651 }} />}
              </Fragment>
            ))}
            <span className="absolute left-[38px] top-[51px] h-[2px] w-[114px] bg-[#1e5a80]" />
            <div className="absolute left-[38px] top-[191px] flex h-[148px] w-[114px] gap-[1px] bg-[#14171a]">
              <div className="flex-1 bg-[repeating-linear-gradient(180deg,#3f76b9_0_3px,#33609a_3px_5px)]" />
              {pair && <div className="flex-1 bg-[repeating-linear-gradient(180deg,#3f76b9_0_3px,#33609a_3px_5px)]" />}
            </div>
          </div>
        </div>
      </div>
      <Label color="#fff" text="text-[#111]" name={label} w={162} />
    </div>
  );
}

function MainStrip() {
  return (
    <div className="flex w-[162px] shrink-0 flex-col">
      <div className="flex h-[535px] shrink-0 flex-col bg-[#33373c]">
        <div className="h-[7px] shrink-0 bg-white" />
        <div className="mx-[9px] mt-[9px] flex h-[36px] shrink-0 items-center rounded-t-[3px] bg-[#25282c] text-[18px] font-bold text-[#3f7fa6]">
          <span className="flex-1 text-center">-∞</span>
          <span className="flex-1 border-l-2 border-[#303338] text-center">-∞</span>
        </div>
        <div className="mx-[9px] flex h-[35px] shrink-0 items-center bg-[#2d3136] text-[24px]">
          <span className="w-[72px] text-center text-[#dcdde0]">0dB</span>
          <span className="flex-1 border-l-2 border-[#26292d] text-center text-[#5c6064]">0</span>
        </div>
        <div className="mx-[13px] mt-[10px] grid h-[82px] shrink-0 grid-cols-2 grid-rows-2 overflow-hidden rounded-[4px] border-2 border-[#15171a]">
          <div className="flex items-center justify-center border-b-2 border-r-2 border-[#1d2024] text-[25px] text-[#c9cbcd]">M</div>
          <div className="flex items-center justify-center border-b-2 border-[#1d2024] text-[25px] text-[#c9cbcd]">S</div>
          <div className="col-span-2 flex">
            <div className="flex w-[50px] items-center justify-center bg-[#4f8fb3]">
              <svg width="24" height="26" viewBox="0 0 24 26"><path d="M11 1h3l9 24H1z" fill="#fff" /><path d="M4 4l14 16" stroke="#4f8fb3" strokeWidth="2" /></svg>
            </div>
            <div className="flex w-[33px] items-center justify-center border-r-2 border-[#1d2024]">
              <svg width="14" height="26" viewBox="0 0 14 26"><path d="M5 0h4v26H5zM1 6h12v12H1z" fill="#a7a9ac" /><path d="M1 11h12v2H1z" fill="#333" /></svg>
            </div>
            <div className="flex flex-1 items-center justify-center">
              <svg width="34" height="22" viewBox="0 0 34 22"><circle cx="11" cy="11" r="10" fill="#a7a9ac" /><circle cx="22" cy="11" r="9" fill="#33373c" stroke="#c9cbcd" strokeWidth="3" /></svg>
            </div>
          </div>
        </div>
        <div className="relative mt-[16px] h-[249px] shrink-0">
          <div className="absolute left-[20px] top-0 flex w-[24px] flex-col gap-[1px]">
            <span className="h-[7px] bg-[#5ab8ea]" />
            <span className="h-[7px] bg-[#4a4e54]" />
            <span className="h-[7px] bg-[#4a4e54]" />
          </div>
          <div className="absolute left-[20px] top-[160px] flex gap-[2px]">
            <span className="h-[22px] w-[12px] bg-[#a7a9ac]" />
            <span className="h-[22px] w-[12px] bg-[#6b6f74]" />
          </div>
          <div className="absolute left-[20px] top-[211px]"><Knob /></div>
          <div className="absolute bottom-0 left-[66px] top-[115px] w-[28px] bg-[#5a5f64]" />
          <div className="absolute left-[78px] top-[32px] h-[184px] w-[3px] bg-[#15171a]" />
          {[1789, 1812, 1837, 1853, 1867].map((y) => (
            <span key={y} className="absolute left-[68px] h-[2px] w-[24px] bg-[#71757a]" style={{ top: y - 1663 }} />
          ))}
          <Cap blue top={1706} />
          <div className="absolute bottom-0 left-[102px] top-[24px] w-[25px] bg-[#1a1d20]" />
          {MAIN.map(([t, y]) => (
            <Fragment key={t}>
              <span className="absolute left-[126px] w-[30px] text-right text-[17px] font-bold leading-[16px] text-[#b9bbbe]" style={{ top: y - 1663 - 8 }}>{t}</span>
              <span className={`absolute left-[105px] h-[2px] w-[19px] ${t === "-3" ? "bg-[#a8aaad]" : "bg-[#1d5b7f]"}`} style={{ top: y - 1663 - 4 }} />
            </Fragment>
          ))}
        </div>
        <div className="mx-[10px] mt-[48px] flex h-[32px] shrink-0 items-center justify-center rounded-[3px] bg-[#7aa970] text-[22px] text-[#15171a]">读取</div>
      </div>
      <Label color="#fff" text="text-[#111]" name="Main" w={162} />
    </div>
  );
}

const S = (n: number, val: string, cap: number, color: string, rest: Partial<Strip> = {}): Strip => ({ n, val, cap, color, type: "piano", lit: [0], ...rest });

function MixerPanel() {
  const item = "flex h-[46px] shrink-0 items-center justify-center bg-[#3c4045] text-[24px] text-[#c9cbcd]";
  return (
    <div className="flex w-[113px] shrink-0 flex-col gap-[2px] bg-[#22262a]">
      <div className="flex h-[44px] shrink-0 items-center justify-between bg-[#3c4045] px-[14px]">
        <X size={28} strokeWidth={4} color="#c9cbcd" />
        <svg width="22" height="22" viewBox="0 0 24 24"><path d="M8 3h15v15l-5-5-10 10-6-6 10-10z" fill="#b7b9bc" /></svg>
      </div>
      <div className={`${item} overflow-hidden`}>
        <div className="flex w-[78px] shrink-0 justify-center overflow-hidden">
          <span className="shrink-0 whitespace-nowrap">输入/输出</span>
        </div>
        <span className="flex h-full flex-1 items-center justify-center border-l-2 border-[#33373c]"><Tri s={14} c="#c9cbcd" /></span>
      </div>
      <div className={item}><Wrench size={28} color="#c7c9cb" fill="#c7c9cb" /></div>
      <div className="h-[27px] shrink-0" />
      <div className={`${item} h-[54px] flex-col gap-[6px]`}>
        <Tri dir="up" s={18} c="#c9cbcd" />
        <Tri s={18} c="#c9cbcd" />
      </div>
      <div className={`${item} h-[54px] gap-[6px]`}>
        <Tri dir="right" s={18} c="#c9cbcd" />
        <Tri dir="left" s={18} c="#c9cbcd" />
      </div>
      <div className={`${item} bg-[#3093d8] font-bold text-white`}>输入</div>
      <div className={item}>输出</div>
      <div className={item}>外部</div>
      <div className={item}>乐器</div>
      <div className={item}>
        <svg width="28" height="28" viewBox="0 0 28 28"><path d="M2 12h6v16H2zM11 8h6v20h-6zM20 12h6v16h-6z" fill="#c7c9cb" /><circle cx="5" cy="8" r="3" fill="#c7c9cb" /><circle cx="14" cy="3" r="3" fill="#c7c9cb" /><circle cx="23" cy="8" r="3" fill="#c7c9cb" /></svg>
      </div>
      <div className={item}><Menu size={36} strokeWidth={3} color="#c7c9cb" /></div>
    </div>
  );
}

function Mixer() {
  const gs: { color: string; text: string; name: string; strip: Strip; insert?: boolean }[] = [
    { color: "#f577f9", text: "text-[#111]", name: "Vocal Main", insert: true, strip: S(1, "-33.2", 1794, "#f577f9", { type: "wave", v1: true, rec: true, mon: true, lit: [0, 1] }) },
    { color: "#0a4dff", text: "text-white", name: "Vocal Backing", insert: true, strip: S(2, "-oo", 1835, "#0a4dff", { type: "wave", lit: [0, 1] }) },
    { color: "#d9ae78", text: "text-[#111]", name: "Guitar Input", strip: S(3, "+10.0", 1665, "#d9ae78", { type: "wave", lit: [0, 1] }) },
    { color: "#ffffff", text: "text-[#111]", name: "Drumset", strip: S(4, "-oo", 1835, "#ffffff") },
    { color: "#2f4555", text: "text-white", name: "Piano", strip: S(5, "-oo", 1835, "#2f4555", { sel: true, rec: true, lit: [1] }) },
    { color: "#88d5d6", text: "text-[#111]", name: "Presence 4", strip: S(6, "-oo", 1835, "#88d5d6", { lit: [] }) },
    { color: "#74500f", text: "text-white", name: "Bass", strip: S(7, "-15.2", 1758, "#74500f") },
    { color: "#6a5ab0", text: "text-white", name: "Reverb", strip: S(8, "0dB", 1706, "#6a5ab0", { type: "fx", blue: true, bus: true }) },
    { color: "#9b9bfb", text: "text-[#111]", name: "Delay", strip: S(9, "0dB", 1706, "#9b9bfb", { type: "fx", blue: true, bus: true }) },
  ];
  return (
    <div className="mt-[4px] flex h-[602px] shrink-0 bg-[#15181b] pl-[5px] pr-[6px]">
      <MixerPanel />
      <div className="ml-[2px] flex min-w-0 flex-1 flex-col">
        <div className="flex h-[566px] shrink-0 pt-[2px]">
          <div className="flex gap-[4px]">
            <InputStrip name="Input 1 + 2" label="Input L+R" vals={["-28.7", "-28.7"]} pair />
            <InputStrip name="Input 1" label="Input L" vals={["-28.7"]} />
            <div className="flex w-[12px] flex-col overflow-hidden">
              <div className="h-[7px] bg-white" />
              <div className="h-[528px] bg-[#1b1e22]" />
              <div className="h-[29px] bg-white" />
            </div>
          </div>
          <div className="w-[12px] shrink-0" />
          <div className="flex gap-[4px]">
            {gs.map((g) => (
              <div key={g.name} className="flex flex-col">
                <div className="flex gap-[4px]">
                  <ChannelStrip s={g.strip} />
                  {g.insert && <InsertPanel color={g.color} />}
                </div>
                <Label color={g.color} text={g.text} name={g.name} w={g.insert ? 372 : 162} />
              </div>
            ))}
          </div>
          <div className="ml-[4px] flex-1 bg-[#25282c]" />
          <MainStrip />
        </div>
        <div className="flex h-[36px] shrink-0 items-center bg-[#25282c]">
          <div className="flex w-[344px] items-center border-r-4 border-[#15181b] pl-[14px] pr-[12px]">
            <Tri dir="left" s={18} c="#7e8185" />
            <div className="ml-[16px] h-[14px] w-[168px] bg-[#5c6064]" />
            <span className="ml-auto"><Tri dir="right" s={18} c="#7e8185" /></span>
          </div>
          <div className="ml-[12px] flex flex-1 items-center pl-[10px] pr-[186px]">
            <Tri dir="left" s={18} c="#7e8185" />
            <span className="ml-auto"><Tri dir="right" s={18} c="#7e8185" /></span>
          </div>
        </div>
      </div>
    </div>
  );
}

function TIcon({ w, children }: { w: number; children: ReactNode }) {
  return (
    <div className="flex shrink-0 items-center justify-center" style={{ width: w }}>
      {children}
    </div>
  );
}

function Transport() {
  const dots = Array.from({ length: 12 }, (_, i) => {
    const a = (i * Math.PI * 2) / 12;
    return <circle key={i} cx={28 + 24 * Math.cos(a)} cy={28 + 24 * Math.sin(a)} r={i % 3 === 0 ? 3.5 : 2.5} fill="#b7b9bc" />;
  });
  const lbl = "text-[21px] text-[#8e9194]";
  return (
    <div className="flex h-[98px] shrink-0 flex-col">
      <div className="flex h-[84px] bg-[#5b5f64]">
        <div className="w-[230px] shrink-0" />
        <div className="flex w-[2841px] shrink-0 items-center bg-[#131313] [clip-path:polygon(0_0,100%_0,calc(100%-26px)_100%,16px_100%)]">
          <div className="ml-[20px] flex w-[80px] shrink-0 flex-col items-center gap-[6px]">
            <div className="flex items-center gap-[3px]">
              <Tri dir="left" s={12} c="#4b6b80" />
              <svg width="34" height="34" viewBox="0 0 34 34"><circle cx="17" cy="17" r="15" fill="none" stroke="#7f8c96" strokeWidth="2.5" /><circle cx="10" cy="17" r="2.5" fill="#7f8c96" /><circle cx="24" cy="17" r="2.5" fill="#7f8c96" /><circle cx="17" cy="10" r="2.5" fill="#7f8c96" /><circle cx="17" cy="24" r="2.5" fill="#7f8c96" /><circle cx="17" cy="17" r="2.5" fill="#7f8c96" /></svg>
              <Tri dir="right" s={12} c="#4b6b80" />
            </div>
            <span className={lbl}>MIDI</span>
          </div>
          <div className="ml-[8px] flex w-[130px] shrink-0 flex-col gap-[3px]">
            <div className="flex h-[11px] bg-[#2f3237]"><span className="w-[7px] bg-[#4eb2ea]" /></div>
            <div className="h-[11px] bg-[#2f3237]" />
            <span className={`${lbl} mt-[7px] text-center`}>性能</span>
          </div>
          <svg width="56" height="56" viewBox="0 0 56 56" className="ml-[26px] shrink-0">{dots}</svg>
          <div className="ml-[22px] flex w-[136px] shrink-0 flex-col gap-[6px] text-[25px] text-[#e2e3e5]">
            <span>44.1 kHz</span>
            <span className="text-[22px]">4.0 ms</span>
          </div>
          <div className="flex w-[220px] shrink-0 flex-col gap-[6px]">
            <span className="text-[25px] text-[#e2e3e5]">1:15 天</span>
            <span className={lbl}>最大剩余录音时间</span>
          </div>
          <div className="flex w-[164px] shrink-0 flex-col items-center gap-[6px]">
            <span className="text-[25px] text-[#c4c6c8]">00:00:00.000</span>
            <span className={lbl}>秒</span>
          </div>
          <div className="ml-[56px] flex w-[273px] shrink-0 flex-col items-center gap-[2px]">
            <span className="whitespace-nowrap text-[38px] font-bold leading-[38px] tracking-[0.8px] text-[#e0e1e3]">00001.01.01.00</span>
            <span className={lbl}>小节</span>
          </div>
          <div className="w-[20px] shrink-0" />
          <TIcon w={55}><Tri dir="left" s={28} c="#c9cacc" /></TIcon>
          <TIcon w={55}><Tri dir="left" s={24} c="#c9cacc" /><Tri dir="left" s={24} c="#c9cacc" /></TIcon>
          <TIcon w={60}><Tri dir="right" s={24} c="#c9cacc" /><Tri dir="right" s={24} c="#c9cacc" /></TIcon>
          <TIcon w={40}><Tri dir="right" s={24} c="#c9cacc" /></TIcon>
          <TIcon w={55}><span className="h-[30px] w-[2px] bg-[#c9cacc]" /><Tri dir="left" s={24} c="#c9cacc" /></TIcon>
          <TIcon w={92}><span className="h-[40px] w-[40px] bg-[#2cb6df]" /></TIcon>
          <TIcon w={56}><Tri dir="right" s={40} c="#c9cacc" /></TIcon>
          <TIcon w={76}><span className="h-[42px] w-[40px] rounded-full bg-[#c9cacc]" /></TIcon>
          <TIcon w={95}>
            <svg width="62" height="44" viewBox="0 0 62 44"><path d="M20 38H14C6 38 3 30 3 22S6 6 14 6h34c8 0 11 8 11 16s-3 16-11 16H30l8-12" fill="none" stroke="#4fc3ef" strokeWidth="4" /></svg>
          </TIcon>
          <div className="ml-[30px] flex w-[23px] shrink-0 flex-col gap-[8px] text-[26px] text-[#3f7fa6]">
            <span className="leading-[30px]">L</span>
            <span className="leading-[30px]">R</span>
          </div>
          <div className="ml-[6px] flex w-[200px] shrink-0 flex-col gap-[8px] whitespace-nowrap text-[25px] tracking-[0.5px] text-[#d7d8da]">
            <span className="leading-[30px]">00001 .01.01.00</span>
            <span className="leading-[30px]">00121 .01.01.00</span>
          </div>
          <div className="grid w-[117px] shrink-0 grid-cols-2 gap-y-[12px]">
            <TIcon w={58}><svg width="30" height="22" viewBox="0 0 30 22"><path d="M2 19h8l6-16h6l4 16h3" fill="none" stroke="#c9cacc" strokeWidth="2" /></svg></TIcon>
            <TIcon w={58}><svg width="24" height="26" viewBox="0 0 24 26"><path d="M3 0v26" stroke="#c9cacc" strokeWidth="2" /><rect x="9" y="7" width="14" height="12" fill="#c9cacc" /></svg></TIcon>
            <TIcon w={58}><Settings size={26} color="#8f9296" fill="#8f9296" /></TIcon>
            <TIcon w={58}><svg width="28" height="24" viewBox="0 0 28 24"><path d="M4 0v24M24 0v24" stroke="#9a9ca0" strokeWidth="2" /><rect x="8" y="6" width="12" height="12" fill="#9a9ca0" /></svg></TIcon>
          </div>
          <div className="flex w-[120px] shrink-0 flex-col items-center gap-[10px]">
            <div className="flex items-center gap-[16px]">
              <span className="h-[24px] w-[16px] rounded-full bg-[#8f9296]" />
              <Wrench size={24} color="#a7a9ac" fill="#a7a9ac" />
              <svg width="22" height="26" viewBox="0 0 22 26"><path d="M9 1h4l8 24H1z" fill="#8f9296" /></svg>
            </div>
            <span className={lbl}>节拍器</span>
          </div>
          <div className="ml-[10px] flex w-[110px] shrink-0 flex-col items-center gap-[8px]">
            <span className="text-[25px] text-[#d7d8da]">4 / 4</span>
            <span className={lbl}>时间修整</span>
          </div>
          <div className="flex w-[76px] shrink-0 flex-col items-center gap-[8px]">
            <span className="text-[25px] text-[#d7d8da]">-</span>
            <span className={lbl}>键</span>
          </div>
          <div className="flex w-[110px] shrink-0 flex-col items-center gap-[8px]">
            <span className="text-[25px] text-[#d7d8da]">100.00</span>
            <span className={lbl}>速度</span>
          </div>
          <div className="ml-[20px] flex w-[133px] shrink-0 flex-col">
            <div className="h-[9px] bg-[#3a3d42]" />
            <div className="mt-[2px] h-[9px] bg-[#3a3d42]" />
            <div className="mt-[15px] flex h-[19px]">
              <div className="w-[100px] bg-[repeating-linear-gradient(90deg,#4b96c4_0_2px,#1b2a35_2px_3px)]" />
              <div className="flex-1 bg-[repeating-linear-gradient(90deg,#3a3d42_0_2px,#1b1c1f_2px_3px)]" />
            </div>
          </div>
          <svg width="24" height="20" viewBox="0 0 24 20" className="ml-[14px] mt-[38px] shrink-0"><circle cx="8" cy="10" r="8" fill="#4fc3ef" /><circle cx="17" cy="10" r="6" fill="#131313" stroke="#4fc3ef" strokeWidth="3" /></svg>
        </div>
        <div className="w-[215px] shrink-0 border-r-2 border-[#46494d]" />
        <div className="flex w-[112px] shrink-0 items-center justify-center border-r-2 border-[#46494d] text-[24px] text-[#e2e3e5]">编辑</div>
        <div className="flex w-[113px] shrink-0 items-center justify-center border-r-2 border-[#2a76ae] bg-[#3591d6] text-[24px] text-white">混音</div>
        <div className="flex flex-1 items-center justify-center bg-[#3591d6] text-[24px] text-white">浏览</div>
      </div>
      <div className="flex h-[14px] bg-[linear-gradient(180deg,#5a5d62,#3a3d41)]" />
    </div>
  );
}

export default function App() {
  return (
    <div className="flex h-[2174px] w-[3640px] flex-col overflow-hidden bg-[#0d0f11] font-['Liberation_Sans','Noto_Sans_CJK_SC',sans-serif]">
      <TitleBar />
      <Toolbar />
      <MacroBar />
      <div className="flex h-[1839px] shrink-0">
        <div className="flex w-[3128px] shrink-0 flex-col">
          <Arrange />
          <Mixer />
        </div>
        <Browser />
      </div>
      <div className="h-[8px] shrink-0" />
      <Transport />
    </div>
  );
}
